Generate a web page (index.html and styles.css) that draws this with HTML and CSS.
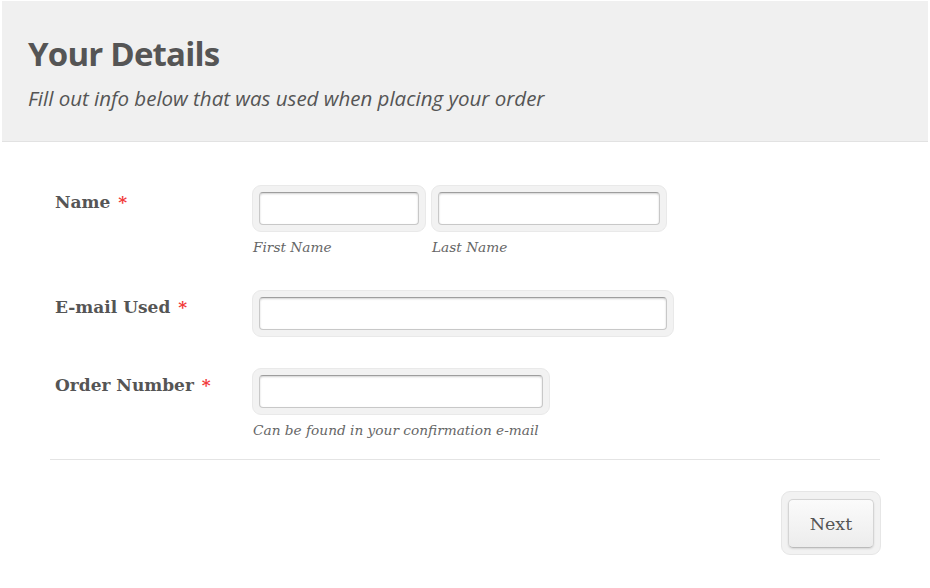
FILE: index.html
```html
<!DOCTYPE html>
<html>
<head>
<meta charset="utf-8">
<link rel="stylesheet" href="styles.css">
</head>
<body>
<div class="header">
  <h1 class="title">Your Details</h1>
  <p class="subtitle">Fill out info below that was used when placing your order</p>
</div>
<form class="form">
  <div class="row row-name">
    <label class="label">Name <span class="req">*</span></label>
    <div class="fields">
      <div class="field">
        <div class="wrap w-first"><input class="input" type="text"></div>
        <span class="sub">First Name</span>
      </div>
      <div class="field">
        <div class="wrap w-last"><input class="input" type="text"></div>
        <span class="sub">Last Name</span>
      </div>
    </div>
  </div>
  <div class="row row-email">
    <label class="label">E-mail Used <span class="req">*</span></label>
    <div class="fields">
      <div class="field">
        <div class="wrap w-email"><input class="input" type="text"></div>
      </div>
    </div>
  </div>
  <div class="row row-order">
    <label class="label">Order Number <span class="req">*</span></label>
    <div class="fields">
      <div class="field">
        <div class="wrap w-order"><input class="input" type="text"></div>
        <span class="sub">Can be found in your confirmation e-mail</span>
      </div>
    </div>
  </div>
  <hr class="divider">
  <div class="actions">
    <div class="btn-wrap"><button class="btn" type="button">Next</button></div>
  </div>
</form>
</body>
</html>
```
FILE: styles.css
```css
* { box-sizing: border-box; }
body {
  margin: 0;
  background: #fff;
  color: #555;
  font-family: "DejaVu Serif", serif;
}
.header {
  margin: 1px 2px 0 2px;
  background: #f0f0f0;
  border-bottom: 1px solid #e2e2e2;
  height: 141px;
  padding: 33px 0 0 26px;
}
.title {
  margin: 0;
  font-family: "Open Sans", sans-serif;
  font-weight: 700;
  font-size: 33px;
  line-height: 40px;
  color: #555;
  letter-spacing: -0.8px;
}
.subtitle {
  margin: 11px 0 0 0;
  font-family: "Open Sans", sans-serif;
  font-style: italic;
  font-size: 20.5px;
  line-height: 27px;
  color: #555;
  letter-spacing: 0;
}
.form {
  margin: 0 50px 0 50px;
  width: 830px;
}
.row {
  display: flex;
  padding-left: 5px;
}
.row-name { margin-top: 43px; }
.row-email { margin-top: 34px; }
.row-order { margin-top: 31px; }
.label {
  width: 197px;
  flex: none;
  padding-top: 5px;
  font-weight: 700;
  font-size: 17px;
  line-height: 24px;
  color: #555;
}
.req {
  color: #f23a3a;
  margin-left: 2px;
}
.fields {
  display: flex;
  gap: 5px;
}
.field {
  display: flex;
  flex-direction: column;
}
.wrap {
  background: #f2f2f2;
  border: 1px solid #e9e9e9;
  border-radius: 9px;
  padding: 6px;
  height: 47px;
}
.w-first { width: 174px; }
.w-last { width: 236px; }
.w-email { width: 422px; }
.w-order { width: 298px; }
.input {
  display: block;
  width: 100%;
  height: 33px;
  margin: 0;
  border: 1px solid #c8c8c8;
  border-top-color: #9e9e9e;
  border-radius: 4px;
  background: #fff;
  box-shadow: inset 0 1px 2px rgba(0,0,0,0.18);
  outline: none;
}
.sub {
  margin-top: 6px;
  padding-left: 1px;
  font-style: italic;
  font-size: 13.7px;
  line-height: 18px;
  color: #666;
}
.divider {
  margin: 20px 0 0 0;
  border: 0;
  border-top: 1px solid #e4e4e4;
  height: 0;
}
.actions {
  display: flex;
  justify-content: flex-end;
  margin-top: 31px;
  margin-right: -1px;
}
.btn-wrap {
  width: 100px;
  height: 64px;
  background: #f2f2f2;
  border: 1px solid #e6e6e6;
  border-radius: 9px;
  padding: 7px 6px 6px 6px;
}
.btn {
  display: block;
  width: 86px;
  height: 49px;
  margin: 0;
  border: 1px solid #d4d4d4;
  border-bottom-color: #bbb;
  border-radius: 5px;
  background: linear-gradient(#fbfbfb, #ececec);
  box-shadow: 0 1px 2px rgba(0,0,0,0.12);
  font-family: "DejaVu Serif", serif;
  font-size: 17.5px;
  color: #555;
  padding: 0;
}
```
